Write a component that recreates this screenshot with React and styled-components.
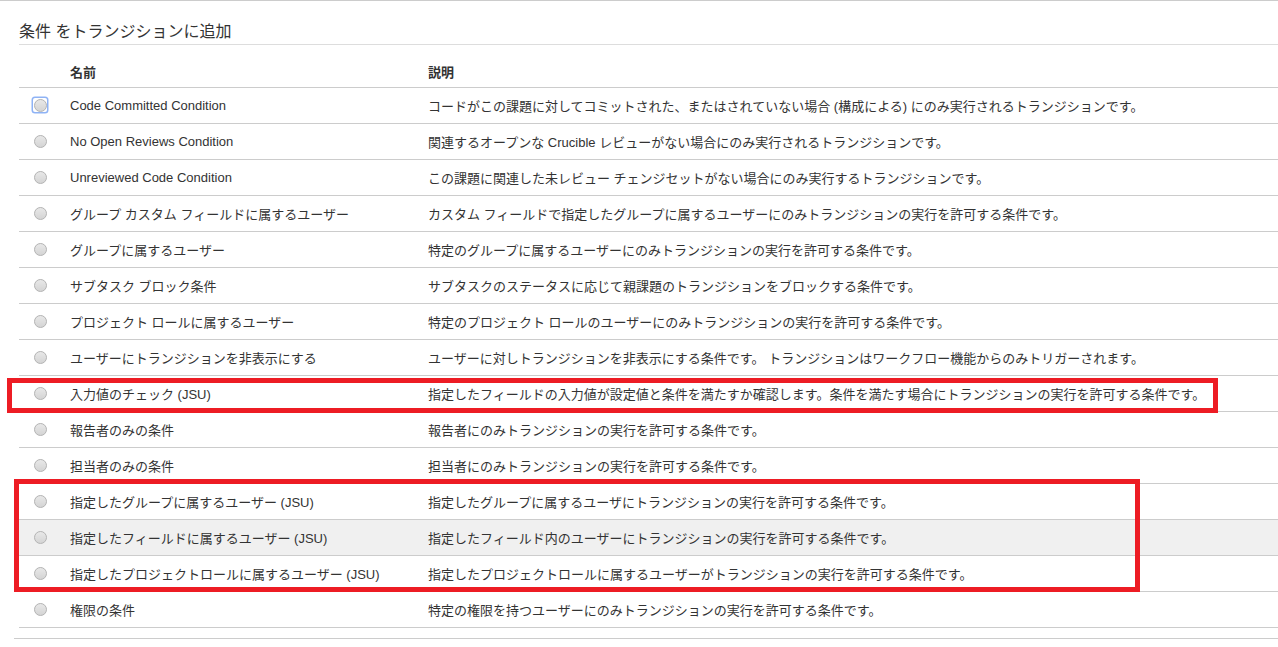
import React from 'react';
import styled, { createGlobalStyle } from 'styled-components';

const GlobalStyle = createGlobalStyle`
  html, body {
    margin: 0;
    padding: 0;
    background: #fff;
  }
  body {
    font-family: "Liberation Sans", Arial, "Noto Sans CJK JP", sans-serif;
    color: #333;
  }
`;

const Page = styled.div`
  position: relative;
  width: 1278px;
  height: 647px;
  overflow: hidden;
  border-top: 1px solid #ccc;
  box-sizing: border-box;
`;

const Title = styled.h2`
  margin: 0 0 0 19px;
  padding-top: 19px;
  font-size: 16px;
  font-weight: normal;
  line-height: 24px;
  color: #333;
  border-bottom: 1px solid #ddd;
`;

const Table = styled.table`
  margin: 10px 0 0 19px;
  width: calc(100% - 19px);
  border-collapse: collapse;
  font-size: 13px;
`;

const HeadCell = styled.th`
  text-align: left;
  font-weight: bold;
  height: 32px;
  padding: 0 10px;
  vertical-align: middle;
  border-bottom: 1px solid #ccc;
  width: ${props => props.w || 'auto'};
`;

const Row = styled.tr`
  background: ${props => props.hover ? '#f0f0f0' : 'transparent'};
  border-bottom: 1px solid #ccc;
`;

const Cell = styled.td`
  height: 35px;
  padding: 0 10px;
  vertical-align: middle;
  white-space: nowrap;
`;

const RadioCell = styled.td`
  width: 41px;
  padding: 0;
  text-align: center;
  vertical-align: middle;
`;

const RadioWrap = styled.span`
  display: inline-flex;
  align-items: center;
  justify-content: center;
  width: 14px;
  height: 14px;
  margin-top: 2px;
  margin-left: 1px;
  border-radius: 2px;
  box-shadow: ${props => props.focused ? '0 0 0 1.5px #8fb3f5' : 'none'};
`;

const Radio = styled.span`
  display: block;
  width: 11px;
  height: 11px;
  border-radius: 50%;
  border: 1px solid #b4b4b4;
  background: linear-gradient(#e8e8e8, #d4d4d4);
`;

const Highlight = styled.div`
  position: absolute;
  border: 5px solid #ed1c24;
  box-sizing: border-box;
  pointer-events: none;
`;

const Footer = styled.div`
  margin: 10px 0 0 14px;
  border-top: 1px solid #ccc;
`;

const rows = [
  ['Code Committed Condition', 'コードがこの課題に対してコミットされた、またはされていない場合 (構成による) にのみ実行されるトランジションです。'],
  ['No Open Reviews Condition', '関連するオープンな Crucible レビューがない場合にのみ実行されるトランジションです。'],
  ['Unreviewed Code Condition', 'この課題に関連した未レビュー チェンジセットがない場合にのみ実行するトランジションです。'],
  ['グループ カスタム フィールドに属するユーザー', 'カスタム フィールドで指定したグループに属するユーザーにのみトランジションの実行を許可する条件です。'],
  ['グループに属するユーザー', '特定のグループに属するユーザーにのみトランジションの実行を許可する条件です。'],
  ['サブタスク ブロック条件', 'サブタスクのステータスに応じて親課題のトランジションをブロックする条件です。'],
  ['プロジェクト ロールに属するユーザー', '特定のプロジェクト ロールのユーザーにのみトランジションの実行を許可する条件です。'],
  ['ユーザーにトランジションを非表示にする', 'ユーザーに対しトランジションを非表示にする条件です。 トランジションはワークフロー機能からのみトリガーされます。'],
  ['入力値のチェック (JSU)', '指定したフィールドの入力値が設定値と条件を満たすか確認します。条件を満たす場合にトランジションの実行を許可する条件です。'],
  ['報告者のみの条件', '報告者にのみトランジションの実行を許可する条件です。'],
  ['担当者のみの条件', '担当者にのみトランジションの実行を許可する条件です。'],
  ['指定したグループに属するユーザー (JSU)', '指定したグループに属するユーザにトランジションの実行を許可する条件です。'],
  ['指定したフィールドに属するユーザー (JSU)', '指定したフィールド内のユーザーにトランジションの実行を許可する条件です。'],
  ['指定したプロジェクトロールに属するユーザー (JSU)', '指定したプロジェクトロールに属するユーザーがトランジションの実行を許可する条件です。'],
  ['権限の条件', '特定の権限を持つユーザーにのみトランジションの実行を許可する条件です。'],
];

export default function App() {
  return (
    <Page>
      <GlobalStyle />
      <Title>条件 をトランジションに追加</Title>
      <Table>
        <thead>
          <tr>
            <HeadCell w="41px" style={{ padding: 0 }} />
            <HeadCell w="338px">名前</HeadCell>
            <HeadCell>説明</HeadCell>
          </tr>
        </thead>
        <tbody>
          {rows.map(([name, desc], index) => (
            <Row key={name} hover={index === 12}>
              <RadioCell>
                <RadioWrap focused={index === 0}>
                  <Radio />
                </RadioWrap>
              </RadioCell>
              <Cell>{name}</Cell>
              <Cell>{desc}</Cell>
            </Row>
          ))}
        </tbody>
      </Table>
      <Footer />
      <Highlight style={{ left: 7, top: 377, width: 1211, height: 35 }} />
      <Highlight style={{ left: 14, top: 478, width: 1126, height: 113 }} />
    </Page>
  );
}
